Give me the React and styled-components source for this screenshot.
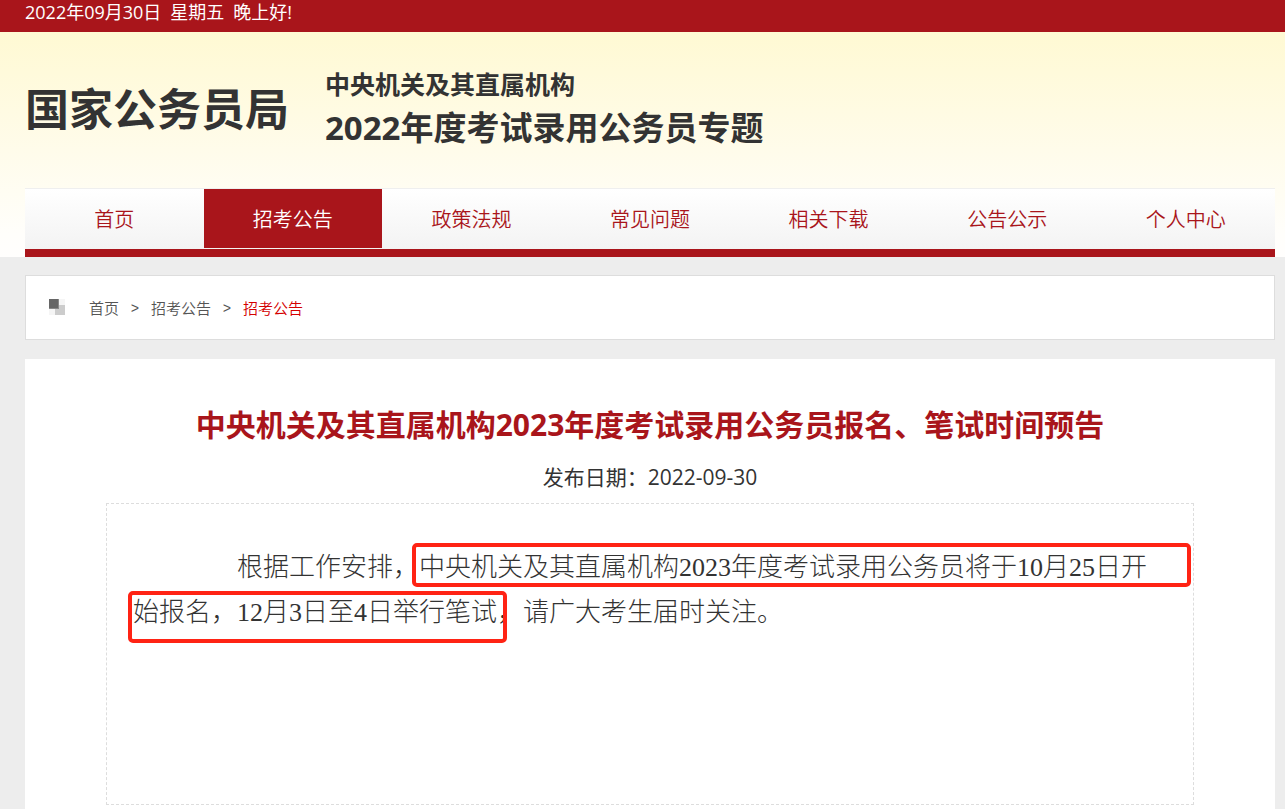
import React from "react";
import styled, { createGlobalStyle } from "styled-components";

const red = "#a9151b";

const GlobalStyle = createGlobalStyle`
  *, *::before, *::after { box-sizing: border-box; }
  html { background: #ededed; }
  body {
    margin: 0;
    color: #333;
    font-family: "Open Sans", "Noto Sans CJK SC", sans-serif;
    font-weight: 350;
  }
  a { color: inherit; text-decoration: none; }
`;

const Container = styled.div`
  margin: 0 10px 0 25px;
`;

const TopBar = styled.div`
  height: 32px;
  background: ${red};
  color: #fff;
`;

const TopBarRow = styled(Container)`
  display: flex;
  gap: 9px;
  font-size: 18px;
  font-weight: 400;
  line-height: 24px;
`;

const Header = styled.header`
  background: linear-gradient(#fff9d3, #fffefb 90%, #fffefd);
`;

const Brand = styled.div`
  display: flex;
  align-items: center;
  gap: 36px;
  height: 156px;
  font-weight: 700;
`;

const Logo = styled.a`
  padding-bottom: 2px;
  font-size: 44px;
  line-height: 60px;
`;

const Campaign = styled.div`
  display: flex;
  flex-direction: column;
  padding-bottom: 4px;
`;

const CampaignLine = styled.span`
  font-size: ${(p) => (p.$large ? 33 : 25)}px;
  line-height: ${(p) => (p.$large ? 48 : 40)}px;
`;

const Nav = styled.nav`
  display: flex;
  height: 69px;
  padding-bottom: 1px;
  border-top: 1px solid #efefef;
  border-bottom: 8px solid ${red};
  background: linear-gradient(#fff, #f3f3f3);
`;

const NavLink = styled.a`
  flex: 1;
  display: flex;
  align-items: center;
  justify-content: center;
  padding-top: 2px;
  font-size: 20px;
  line-height: 30px;
  color: ${(p) => (p.$active ? "#fff" : red)};
  background: ${(p) => (p.$active ? red : "transparent")};
`;

const Crumbs = styled.nav`
  display: flex;
  align-items: center;
  height: 65px;
  margin-top: 18px;
  padding: 0 23px;
  border: 1px solid #ddd;
  background: #fff;
  font-size: 15px;
  line-height: 24px;
  color: #555;
`;

const CrumbIcon = styled.svg`
  width: 16px;
  height: 16px;
  margin: 0 24px 2px 0;
`;

const Crumb = styled.a`
  color: ${(p) => (p.$current ? "#d40000" : "inherit")};
`;

const Separator = styled.span`
  width: 32px;
  padding-top: 3px;
  text-align: center;
  font-family: "Liberation Mono", monospace;
  font-size: 14px;
  font-weight: 400;
`;

const Panel = styled.main`
  margin-top: 19px;
  padding: 43px 81px 4px;
  background: #fff;
`;

const Title = styled.h1`
  margin: 0;
  font-size: 30px;
  line-height: 46px;
  font-weight: 700;
  text-align: center;
  color: ${red};
`;

const Published = styled.p`
  margin: 14px 0 11px;
  font-size: 21px;
  font-weight: 400;
  line-height: 30px;
  text-align: center;
`;

const Article = styled.article`
  position: relative;
  min-height: 302px;
  padding: 41px 26px;
  border: 1px dashed #ddd;
`;

const Paragraph = styled.p`
  margin: 0;
  font-family: "Liberation Serif", "Noto Sans CJK SC", serif;
  font-size: 26px;
  font-weight: 300;
  line-height: 45px;
  text-indent: 4em;
`;

const Mark = styled.span`
  position: absolute;
  border: 4px solid #ff2314;
  border-radius: 5px;
`;

const FirstMark = styled(Mark)`
  top: 39px;
  left: 305px;
  right: 2px;
  height: 44px;
`;

const SecondMark = styled(Mark)`
  top: 87px;
  left: 21px;
  width: 379px;
  height: 52px;
`;

const navItems = ["首页", "招考公告", "政策法规", "常见问题", "相关下载", "公告公示", "个人中心"];

export default function App() {
  return (
    <>
      <GlobalStyle />
      <TopBar>
        <TopBarRow>
          <span>2022年09月30日</span>
          <span>星期五</span>
          <span>晚上好!</span>
        </TopBarRow>
      </TopBar>
      <Header>
        <Container>
          <Brand>
            <Logo href="#">国家公务员局</Logo>
            <Campaign>
              <CampaignLine>中央机关及其直属机构</CampaignLine>
              <CampaignLine $large>2022年度考试录用公务员专题</CampaignLine>
            </Campaign>
          </Brand>
          <Nav>
            {navItems.map((item) => (
              <NavLink key={item} href="#" $active={item === "招考公告"}>
                {item}
              </NavLink>
            ))}
          </Nav>
        </Container>
      </Header>
      <Container>
        <Crumbs>
          <CrumbIcon viewBox="0 0 16 16" shapeRendering="crispEdges" aria-hidden="true">
            <rect width="16" height="16" fill="#f5f5f5" />
            <rect x="6" y="6" width="10" height="10" fill="#ccc" />
            <rect width="10" height="10" fill="#888" />
            <rect width="9" height="9" fill="#666" />
          </CrumbIcon>
          <Crumb href="#">首页</Crumb>
          <Separator>&gt;</Separator>
          <Crumb href="#">招考公告</Crumb>
          <Separator>&gt;</Separator>
          <Crumb href="#" $current>招考公告</Crumb>
        </Crumbs>
        <Panel>
          <Title>中央机关及其直属机构2023年度考试录用公务员报名、笔试时间预告</Title>
          <Published>发布日期：2022-09-30</Published>
          <Article>
            <Paragraph>
              根据工作安排，中央机关及其直属机构2023年度考试录用公务员将于10月25日开始报名，12月3日至4日举行笔试，请广大考生届时关注。
            </Paragraph>
            <FirstMark />
            <SecondMark />
          </Article>
        </Panel>
      </Container>
    </>
  );
}
